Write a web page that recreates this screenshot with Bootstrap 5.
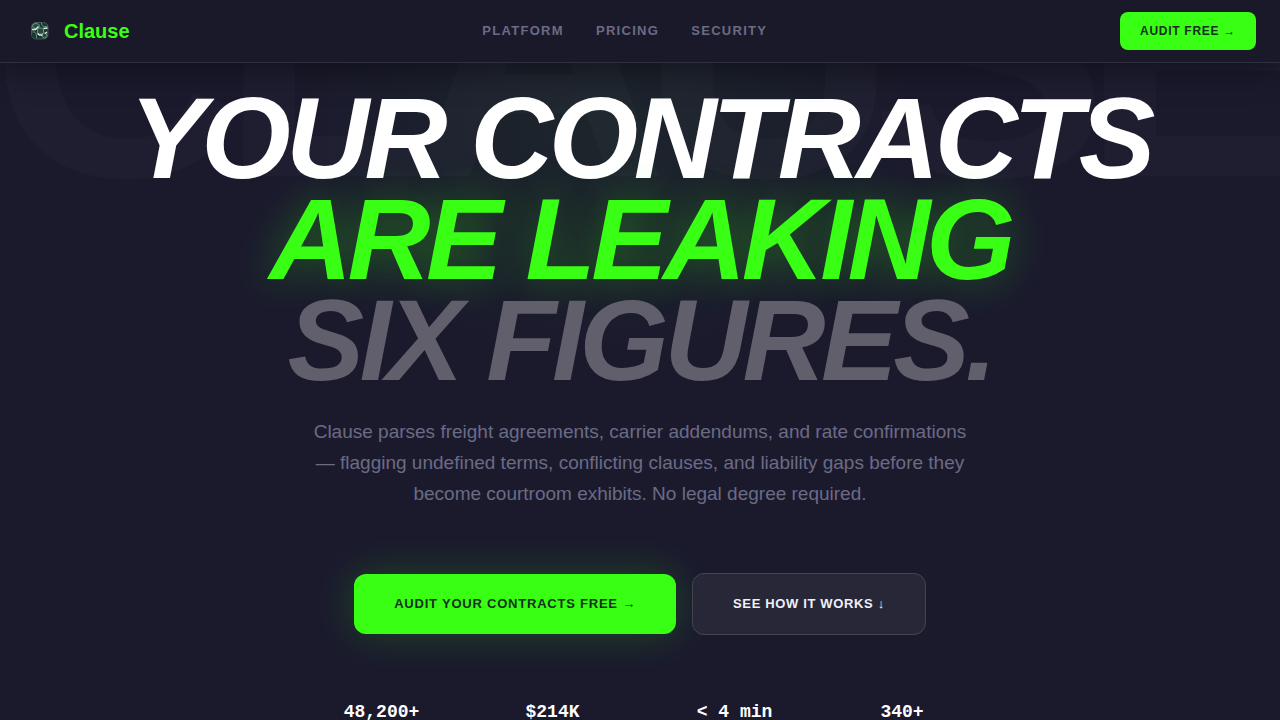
<!DOCTYPE html>
<html lang="en">
<head>
<meta charset="utf-8">
<meta name="viewport" content="width=device-width, initial-scale=1">
<title>Clause</title>
<link href="https://cdn.jsdelivr.net/npm/bootstrap@5.3.0/dist/css/bootstrap.min.css" rel="stylesheet">
<style>
  :root { --neon: #39ff14; --muted: #6b6b85; }
  body { background: #1b1a2d; color: #fff; font-family: "Liberation Sans", Arial, sans-serif; overflow-x: hidden; }
  .topbar { background: #1a192a; border-bottom: 1px solid #302f40; box-shadow: 0 8px 32px rgba(0, 0, 0, .4); padding: 12px 24px; }
  .brand { color: var(--neon); font-size: 20px; line-height: 30px; font-weight: 700; }
  .brand:hover { color: var(--neon); }
  .brand-icon { width: 32px; height: 32px; }
  .menu { gap: 32px; }
  .menu a { color: var(--muted); font-size: 13px; line-height: 20px; font-weight: 600; letter-spacing: .1em; text-decoration: none; }
  .btn-neon, .btn-neon:hover { background: var(--neon); color: #14301c; border: 0; font-weight: 700; }
  .btn-top { font-size: 12px; line-height: 18px; letter-spacing: .06em; padding: 10px 20px; border-radius: 8px; }
  .hero { padding: 25px 24px 96px; }
  .backdrop { overflow: hidden; inset: -63px 0 0; z-index: -1; background: radial-gradient(ellipse 320px 230px at 47% 130px, rgba(57, 255, 20, .05), transparent); }
  .watermark { left: 50%; top: -127px; transform: translateX(-50%); font-size: 28vw; line-height: 1; font-weight: 700; letter-spacing: -.08em; color: rgba(255, 255, 255, .02); white-space: nowrap; }
  .headline { font-size: clamp(44px, 9vw, 115px); line-height: .88; font-weight: 700; font-style: italic; letter-spacing: -.04em; margin-bottom: 24px; }
  .headline .glow { color: var(--neon); text-shadow: 0 0 40px rgba(57, 255, 20, .32); }
  .headline .dim { color: #605f6b; }
  .pitch { max-width: 670px; font-size: 19px; line-height: 31px; color: var(--muted); margin-bottom: 64px; }
  .btn-hero { font-size: 13px; line-height: 20px; font-weight: 700; letter-spacing: .06em; padding: 20px 40px; border-radius: 12px; }
  .btn-hero.btn-neon { box-shadow: 0 0 40px rgba(57, 255, 20, .2); }
  .btn-glass, .btn-glass:hover { background: #282737; border: 1px solid #454452; color: #f0f0fa; letter-spacing: .05em; }
  .stats { gap: 48px; margin-top: 64px; font-family: "Liberation Mono", monospace; font-size: 18px; line-height: 27px; font-weight: 700; }
  .stat-a { width: 112px; }
  .stat-b { width: 134px; }
  .stat-c { width: 105px; }
</style>
</head>
<body>
<header class="topbar sticky-top d-flex align-items-center justify-content-between">
  <a class="brand d-flex align-items-center gap-2 text-decoration-none" href="#">
    <svg class="brand-icon" viewBox="0 0 32 32" aria-hidden="true">
      <rect x="7.500" y="7.500" width="16.500" height="16.500" rx="4.500" fill="#1c3433" stroke="#3f5c55"/>
      <g fill="#29483f" stroke="#6d9484" stroke-width="1">
        <ellipse cx="12" cy="11" rx="3.500" ry="2.500"/>
        <rect x="13.500" y="13" width="6" height="6" rx="2"/>
        <circle cx="20.500" cy="20.500" r="2.500"/>
        <path d="M17.500 8c0 3 2 4 6 3.500M8.500 17c3-.5 4 1 4 6" fill="none"/>
      </g>
      <path d="M8 14.500h3.500l3-3M19.500 13.500l4-.5M13.500 18.500l2 1.500h3M23 17l-2 1.500" fill="none" stroke="#d7f2e3" stroke-width="1.300"/>
    </svg>
    <span>Clause</span>
  </a>
  <nav class="menu d-none d-md-flex" aria-label="Main">
    <a href="#platform">PLATFORM</a>
    <a href="#pricing">PRICING</a>
    <a href="#security">SECURITY</a>
  </nav>
  <button type="button" class="btn btn-neon btn-top">AUDIT FREE →</button>
</header>

<main class="hero position-relative z-0 text-center d-flex flex-column align-items-center">
  <div class="backdrop position-absolute" aria-hidden="true">
    <div class="watermark position-absolute">CLAUSE</div>
  </div>
  <h1 class="headline">
    <span class="d-block">YOUR CONTRACTS</span>
    <span class="d-block glow">ARE LEAKING</span>
    <span class="d-block dim">SIX FIGURES.</span>
  </h1>
  <p class="pitch">Clause parses freight agreements, carrier addendums, and rate confirmations — flagging undefined terms, conflicting clauses, and liability gaps before they become courtroom exhibits. No legal degree required.</p>
  <div class="d-flex flex-wrap justify-content-center align-items-center gap-3">
    <button type="button" class="btn btn-neon btn-hero">AUDIT YOUR CONTRACTS FREE →</button>
    <button type="button" class="btn btn-glass btn-hero">SEE HOW IT WORKS ↓</button>
  </div>
  <div class="stats d-flex flex-wrap justify-content-center">
    <div class="stat-a">48,200+</div>
    <div class="stat-b">$214K</div>
    <div class="stat-b">&lt; 4 min</div>
    <div class="stat-c">340+</div>
  </div>
</main>
<script src="https://cdn.jsdelivr.net/npm/bootstrap@5.3.0/dist/js/bootstrap.bundle.min.js"></script>
</body>
</html>
